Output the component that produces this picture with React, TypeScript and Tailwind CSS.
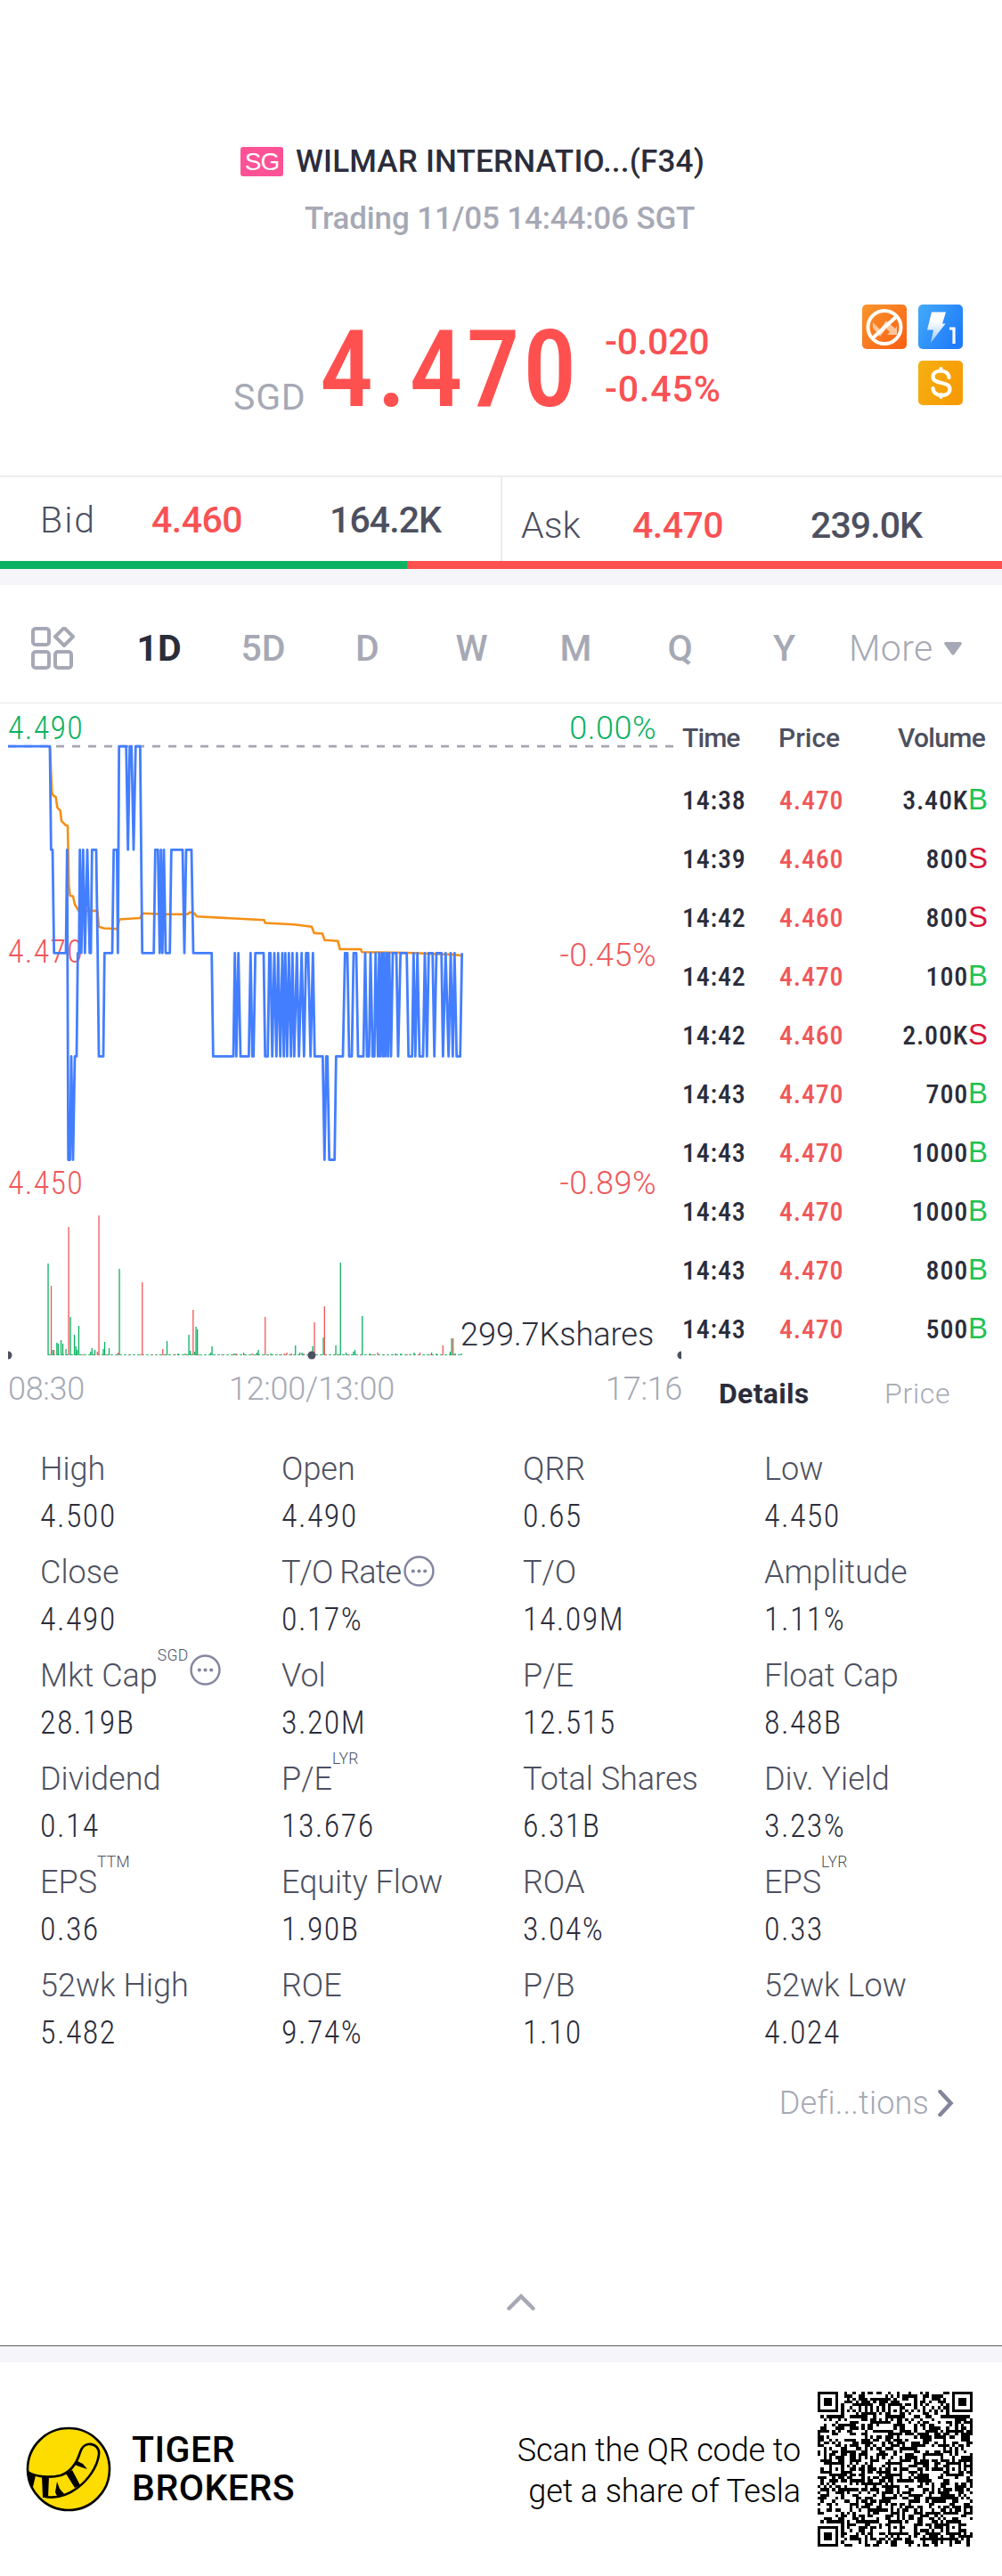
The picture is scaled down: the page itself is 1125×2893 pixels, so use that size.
import type { ReactNode } from 'react';

const GREEN = '#0bb262';
const RED = '#f0575a';

const periods = ['1D', '5D', 'D', 'W', 'M', 'Q', 'Y'];

const ticks: { time: string; price: string; volume: string; side: 'B' | 'S' }[] = [
  { time: '14:38', price: '4.470', volume: '3.40K', side: 'B' },
  { time: '14:39', price: '4.460', volume: '800', side: 'S' },
  { time: '14:42', price: '4.460', volume: '800', side: 'S' },
  { time: '14:42', price: '4.470', volume: '100', side: 'B' },
  { time: '14:42', price: '4.460', volume: '2.00K', side: 'S' },
  { time: '14:43', price: '4.470', volume: '700', side: 'B' },
  { time: '14:43', price: '4.470', volume: '1000', side: 'B' },
  { time: '14:43', price: '4.470', volume: '1000', side: 'B' },
  { time: '14:43', price: '4.470', volume: '800', side: 'B' },
  { time: '14:43', price: '4.470', volume: '500', side: 'B' },
];

interface Stat {
  label: string;
  value: string;
  sup?: string;
  info?: boolean;
}

const stats: Stat[] = [
  { label: 'High', value: '4.500' },
  { label: 'Open', value: '4.490' },
  { label: 'QRR', value: '0.65' },
  { label: 'Low', value: '4.450' },
  { label: 'Close', value: '4.490' },
  { label: 'T/O Rate', value: '0.17%', info: true },
  { label: 'T/O', value: '14.09M' },
  { label: 'Amplitude', value: '1.11%' },
  { label: 'Mkt Cap', value: '28.19B', sup: 'SGD', info: true },
  { label: 'Vol', value: '3.20M' },
  { label: 'P/E', value: '12.515' },
  { label: 'Float Cap', value: '8.48B' },
  { label: 'Dividend', value: '0.14' },
  { label: 'P/E', value: '13.676', sup: 'LYR' },
  { label: 'Total Shares', value: '6.31B' },
  { label: 'Div. Yield', value: '3.23%' },
  { label: 'EPS', value: '0.36', sup: 'TTM' },
  { label: 'Equity Flow', value: '1.90B' },
  { label: 'ROA', value: '3.04%' },
  { label: 'EPS', value: '0.33', sup: 'LYR' },
  { label: '52wk High', value: '5.482' },
  { label: 'ROE', value: '9.74%' },
  { label: 'P/B', value: '1.10' },
  { label: '52wk Low', value: '4.024' },
];

// y of each half-cent price level, 4.490 at the top
const levels = [48.2, 164.3, 280.3, 396.4, 512.5];

// [x in thirds of a pixel, price level]
const priceSteps: [number, number][] = [
  [27, 0], [168, 0], [172, 1], [177, 1], [182, 2], [222, 2], [226, 1], [230, 4], [236, 4], [240, 3],
  [246, 4], [252, 3], [258, 3], [262, 2], [266, 2], [269, 1], [274, 2], [280, 1], [286, 2], [294, 1],
  [302, 2], [306, 2], [310, 1], [324, 1], [329, 2], [333, 3], [348, 3], [352, 2], [378, 2], [383, 1],
  [394, 1], [397, 2], [401, 0], [425, 0], [431, 1], [437, 0], [443, 0], [450, 1], [457, 0], [472, 0],
  [479, 2], [518, 2], [523, 1], [532, 1], [538, 2], [542, 1], [547, 2], [552, 1], [558, 2], [572, 2],
  [577, 1], [615, 1], [621, 2], [627, 1], [645, 1], [651, 2], [713, 2], [718, 3], [786, 3], [791, 2],
  [796, 3], [803, 2], [810, 3], [838, 3], [844, 2], [850, 3], [854, 3], [860, 2], [888, 2], [893, 3],
  [902, 3], [907, 2], [911, 2], [917, 3], [924, 2], [931, 3], [937, 2], [944, 3], [951, 2], [956, 3],
  [961, 2], [967, 3], [973, 2], [980, 3], [985, 2], [991, 3], [1000, 2], [1007, 3], [1016, 2], [1024, 3],
  [1031, 2], [1038, 2], [1046, 3], [1054, 2], [1060, 3], [1087, 3], [1093, 4], [1099, 3], [1103, 3], [1109, 4],
  [1127, 4], [1132, 3], [1155, 3], [1162, 2], [1170, 2], [1176, 3], [1185, 3], [1191, 2], [1200, 2], [1206, 3],
  [1224, 3], [1230, 2], [1236, 3], [1243, 3], [1248, 2], [1255, 3], [1261, 3], [1265, 2], [1273, 3], [1277, 2],
  [1281, 3], [1286, 2], [1290, 3], [1294, 2], [1298, 3], [1303, 2], [1307, 3], [1311, 2], [1317, 3], [1323, 2],
  [1335, 2], [1341, 3], [1349, 2], [1370, 2], [1376, 3], [1388, 3], [1393, 2], [1399, 3], [1406, 2], [1413, 3],
  [1425, 3], [1431, 2], [1438, 3], [1444, 2], [1457, 2], [1463, 3], [1470, 2], [1487, 2], [1492, 3], [1501, 2],
  [1511, 3], [1518, 2], [1525, 3], [1531, 2], [1538, 3], [1550, 3], [1556, 2],
];

const averageSteps: [number, number][] = [
  [168, 163], [175, 310], [180, 318], [188, 322], [193, 355], [203, 365], [207, 397], [220, 410], [228, 413],
  [232, 600], [236, 633], [246, 634], [252, 660], [265, 680], [328, 680], [333, 730], [350, 735], [395, 737],
  [402, 707], [472, 703], [480, 688], [560, 691], [630, 691], [640, 685], [655, 688], [663, 698], [890, 709],
  [893, 718], [990, 723], [1050, 730], [1058, 750], [1086, 752], [1093, 772], [1138, 775], [1145, 801],
  [1215, 801], [1219, 810], [1370, 812], [1530, 818], [1556, 821],
];

const toPoints = (points: [number, number][]) => points.map(([x, y]) => `${x},${y}`).join(' ');
const pricePoints = toPoints(priceSteps.map(([x, level]) => [x / 3, levels[level]]));
const averagePoints = toPoints(averageSteps.map(([x, y]) => [x / 3, y / 2.8 - 10]));

const upBars: [number, number][] = [
  [54, 103], [59, 6], [63.8, 14], [65.3, 13], [68.5, 17], [70.5, 13], [74, 7], [79, 43], [83.5, 23], [85.2, 10],
  [86.7, 6], [88.4, 33], [101.7, 4], [103.2, 8], [106.5, 6], [116, 7], [117.5, 15], [122.5, 8], [134, 97],
  [187.5, 16], [212, 23], [213.6, 5], [218.5, 4], [220, 32], [221.6, 29], [236.5, 3], [238, 10], [273.5, 3],
  [288.5, 3], [290, 6], [331.7, 11], [336.5, 3], [339, 3], [351, 10], [363, 20], [377, 11], [382.2, 104],
  [388.5, 3], [396.8, 4], [398.4, 6], [406.7, 44], [415, 2], [444, 2], [450, 2], [465, 3], [484.5, 3], [490, 2],
  [505.4, 4], [507, 19], [518, 2], [187, 1], [200, 2], [208, 2], [263, 2], [304, 2], [511, 2],
];

const downBars: [number, number][] = [
  [57.5, 78], [60.5, 6], [77, 144], [109.3, 4], [111, 157], [132.5, 3], [159.7, 82], [182.7, 7], [216.8, 51],
  [265, 2], [283, 2], [297.7, 43], [319, 2], [322, 3], [327, 2], [341, 2], [353, 37], [364.3, 55], [424, 3],
  [471.5, 3], [497.2, 11], [508.7, 19],
];

function VolumeBars({ bars, color }: { bars: [number, number][]; color: string }) {
  return (
    <g fill={color}>
      {bars.map(([x, h]) => (
        <rect key={x} x={x - 0.6} y={732 - h} width={1.3} height={h} />
      ))}
    </g>
  );
}

function PriceChart() {
  return (
    <svg viewBox="0 0 765 745" className="absolute inset-0 h-[745px] w-[765px]">
      <line x1="9" x2="757" y1="48.2" y2="48.2" stroke="#a4a7b3" strokeWidth="2.8" strokeDasharray="9 9" />
      <polyline points={averagePoints} fill="none" stroke="#f58f16" strokeWidth="2.6" strokeLinejoin="round" />
      <polyline points={pricePoints} fill="none" stroke="#437eff" strokeWidth="2.8" strokeLinejoin="round" />
      <line x1="54" x2="519" y1="731.6" y2="731.6" stroke={GREEN} strokeWidth="0.9" strokeDasharray="3 2" />
      <line x1="92" x2="515" y1="731.6" y2="731.6" stroke={RED} strokeWidth="0.8" strokeDasharray="2 11" />
      <VolumeBars bars={upBars} color={GREEN} />
      <VolumeBars bars={downBars} color={RED} />
      <g fill="#4d5060">
        <path d="M9 727.5a4.5 4.5 0 0 1 0 9z" />
        <circle cx="350" cy="732" r="4.5" />
        <path d="M765 727.5a4.5 4.5 0 0 0 0 9z" />
      </g>
    </svg>
  );
}

function InfoIcon() {
  return (
    <svg viewBox="0 0 34 34" className="h-[35px] w-[35px]">
      <circle cx="17" cy="17" r="15.5" fill="none" stroke="#8587a0" strokeWidth="2.4" />
      <g fill="#8587a0">
        <circle cx="10.5" cy="17" r="2" />
        <circle cx="17" cy="17" r="2" />
        <circle cx="23.5" cy="17" r="2" />
      </g>
    </svg>
  );
}

function Badges() {
  return (
    <div className="ml-auto mr-11 grid grid-cols-[50px_50px] gap-[13px]">
      <svg viewBox="0 0 50 50">
        <defs>
          <linearGradient id="orange" x1="0" y1="0" x2="1" y2="1">
            <stop offset="0" stopColor="#f8962c" />
            <stop offset="1" stopColor="#fb5d12" />
          </linearGradient>
        </defs>
        <rect width="50" height="50" rx="5" fill="url(#orange)" />
        <path d="M12 20l8 8 7-10 10 9 2-3v10H28l3-3-4-4-7 9-8-10z" fill="#fdc59c" />
        <circle cx="25" cy="25.500" r="18.500" fill="none" stroke="#fff" strokeWidth="4" />
        <path d="M12 37.500L38.500 13.500" stroke="#fff" strokeWidth="4" />
      </svg>
      <svg viewBox="0 0 50 50">
        <defs>
          <linearGradient id="blue" x1="0" y1="0" x2="1" y2="0.6">
            <stop offset="0" stopColor="#44abf8" />
            <stop offset="1" stopColor="#1f7cfb" />
          </linearGradient>
          <linearGradient id="bolt" x1="0" y1="0" x2="0" y2="1">
            <stop offset="0.3" stopColor="#fff" />
            <stop offset="1" stopColor="#9cc8fb" />
          </linearGradient>
        </defs>
        <rect width="50" height="50" rx="5" fill="url(#blue)" />
        <path d="M15 8.500h16l-4 13h3.500L14 43l3-14.500H10z" fill="url(#bolt)" />
        <path d="M35 27h5v17" fill="none" stroke="#fff" strokeWidth="3.200" />
      </svg>
      <svg viewBox="0 0 50 50" className="col-start-2">
        <defs>
          <linearGradient id="gold" x1="0" y1="0" x2="1" y2="0.5">
            <stop offset="0" stopColor="#f6b011" />
            <stop offset="1" stopColor="#f79b05" />
          </linearGradient>
        </defs>
        <rect width="50" height="50" rx="5" fill="url(#gold)" />
        <path
          d="M34.500 19c0-4.500-4-7.500-9-7.500s-9 2.500-9 6.700c0 9.300 19 4.300 19 13.800 0 4.500-4.500 7-9.500 7s-9.500-3-9.500-8M25.500 9v3M25.500 38v3"
          fill="none"
          stroke="#fff"
          strokeWidth="4.200"
          strokeLinecap="round"
        />
      </svg>
    </div>
  );
}

function Header() {
  return (
    <header className="h-[534px] pt-[156px]">
      <div className="flex h-[50px] items-center pl-[270px]">
        <span className="h-[33px] w-[48px] rounded-[3px] bg-[#fd5296] text-center font-['Liberation_Sans',sans-serif] text-[28px] leading-[34px] tracking-[-1px] text-white">
          SG
        </span>
        <h1 className="mt-[2px] ml-[14px] text-[35px] font-medium tracking-[0.2px]">WILMAR INTERNATIO...(F34)</h1>
      </div>
      <p className="mt-[15px] pl-[342px] text-[35px] leading-[50px] font-medium tracking-[-0.15px] text-[#a6a9b5]">
        Trading 11/05 14:44:06 SGT
      </p>
      <div className="mt-[71px] flex items-start pl-[262px]">
        <span className="mt-[73px] w-[97px] text-[41px] leading-[62px] tracking-[0.8px] text-[#a6a9b5]">SGD</span>
        <strong className="mt-[10px] w-[320px] text-[121px] leading-[126px] font-medium font-stretch-condensed tracking-[3.2px] text-[#ff5050]">
          4.470
        </strong>
        <div className="mt-[16px] text-[41px] leading-[53px] font-medium text-[#f95254]">
          <p className="tracking-[-0.2px]">-0.020</p>
          <p className="tracking-[0.9px]">-0.45%</p>
        </div>
        <Badges />
      </div>
    </header>
  );
}

function Quotes() {
  return (
    <section>
      <div className="flex h-24 border-t-2 border-[#ececef] text-[41px] leading-[96px] text-[#4d5060]">
        <div className="flex w-[562px] pl-[45px]">
          <span className="w-[125px] font-light tracking-[2px]">Bid</span>
          <span className="w-[200px] font-medium tracking-[-0.5px] text-[#f95254]">4.460</span>
          <span className="font-medium tracking-[-0.9px]">164.2K</span>
        </div>
        <div className="flex flex-1 border-l-2 border-[#ececef] pt-[6px] pl-[21px]">
          <span className="w-[125px] font-light">Ask</span>
          <span className="w-[200px] font-medium tracking-[-0.5px] text-[#f95254]">4.470</span>
          <span className="font-medium tracking-[-0.9px]">239.0K</span>
        </div>
      </div>
      <div className="flex h-[9px] bg-[#ff5050]">
        <div className="w-[457px] bg-[#0bb262]" />
      </div>
      <div className="h-[18px] bg-[#f5f5fa]" />
    </section>
  );
}

function PeriodTabs() {
  return (
    <nav className="flex h-[133px] items-center border-b border-[#e6e6ea] pt-[11px] pl-[35px] text-[41px] font-medium text-[#a6a9b5]">
      <svg viewBox="0 0 50 50" className="mr-[35px] h-[50px] w-[50px]" fill="none" stroke="#a6a9b5" strokeWidth="4">
        <rect x="2" y="2" width="18" height="18" rx="3" />
        <path d="M37 1l10 10-10 10-10-10z" strokeLinejoin="round" />
        <rect x="2" y="28" width="18" height="18" rx="3" />
        <rect x="27" y="28" width="18" height="18" rx="3" />
      </svg>
      {periods.map((period, i) => (
        <span key={period} className={i === 0 ? 'w-[117px] text-center font-bold text-[#2b2d3b]' : 'w-[117px] text-center'}>
          {period}
        </span>
      ))}
      <span className="ml-[14px] font-light tracking-[0.4px]">More</span>
      <svg viewBox="0 0 20 15" className="ml-[12px] h-[15px] w-5 fill-[#a6a9b5]">
        <path d="M1 0h18l1 2-9 12.500h-2L0 2z" />
      </svg>
    </nav>
  );
}

function ChartPanel() {
  return (
    <div className="relative w-[765px] text-[36px] leading-[36px] font-light">
      <div className="absolute inset-x-0 top-[10px] flex justify-between pr-[28px] pl-[9px] text-[#0bb262]">
        <span className="font-stretch-condensed tracking-[1.3px]">4.490</span>
        <span className="tracking-[0.5px]">0.00%</span>
      </div>
      <div className="absolute inset-x-0 top-[261px] flex justify-between pr-[28px] pl-[9px] text-[#f0575a]">
        <span className="font-stretch-condensed tracking-[1.3px]">4.470</span>
        <span className="mt-1 tracking-[0.5px]">-0.45%</span>
      </div>
      <div className="absolute inset-x-0 top-[521px] flex justify-between pr-[28px] pl-[9px] text-[#f0575a]">
        <span className="font-stretch-condensed tracking-[1.3px]">4.450</span>
        <span className="tracking-[0.5px]">-0.89%</span>
      </div>
      <PriceChart />
      <span className="absolute top-[691px] left-[517px] text-[#2b2d3b]">299.7Kshares</span>
      <div className="absolute inset-x-0 top-[752px] tracking-[-0.3px] text-[#a6a9b5]">
        <span className="absolute left-[9px]">08:30</span>
        <span className="absolute left-[257px]">12:00/13:00</span>
        <span className="absolute -right-px">17:16</span>
      </div>
    </div>
  );
}

function TickList() {
  return (
    <div className="flex-1 pt-px text-[30px] font-medium">
      <div className="flex leading-[75px] text-[#4d5060]">
        <span className="w-[109px] pl-px tracking-[-0.9px]">Time</span>
        <span>Price</span>
        <span className="ml-auto pr-[19px] tracking-[-0.7px]">Volume</span>
      </div>
      {ticks.map((tick, i) => (
        <div key={i} className="flex leading-[66px] font-stretch-condensed tracking-[0.8px]">
          <span className="w-[110px] pl-[1px]">{tick.time}</span>
          <span className="text-[#f0575a]">{tick.price}</span>
          <span className="ml-auto">{tick.volume}</span>
          <span
            className={
              tick.side === 'B'
                ? "-mt-px w-[38px] font-['Liberation_Sans',sans-serif] text-[33px] font-normal text-[#1fc24f]"
                : "-mt-px w-[38px] font-['Liberation_Sans',sans-serif] text-[33px] font-normal text-[#dc1236]"
            }
          >
            {tick.side}
          </span>
        </div>
      ))}
      <div className="flex text-[32px] leading-[79px]">
        <span className="w-[185px] pl-[42px] font-bold tracking-[0.3px]">Details</span>
        <span className="pl-[43px] font-light tracking-[0.7px] text-[#a6a9b5]">Price</span>
      </div>
    </div>
  );
}

function StatCell({ stat }: { stat: Stat }) {
  return (
    <div>
      <dt className="flex h-[53px] items-center text-[#4d5060]">
        <span className={stat.label === 'T/O Rate' ? 'tracking-[-0.9px]' : ''}>{stat.label}</span>
        {stat.sup && <sup className="top-0 self-start text-[17.5px] leading-[8px] tracking-[0.3px]">{stat.sup}</sup>}
        {stat.info && (
          <span className={stat.sup ? 'mb-[13px] ml-px' : 'mb-[3px] ml-[3px]'}>
            <InfoIcon />
          </span>
        )}
      </dt>
      <dd className="leading-[54px] font-stretch-condensed tracking-[1.4px] text-[#2b2d3b]">{stat.value}</dd>
    </div>
  );
}

const QR_SIZE = 53;

// 7x7 finder corners and 5x5 alignment marks over a pseudo random payload
function qrPath(): string {
  const dark: boolean[][] = [];
  let seed = 20241105;
  for (let y = 0; y < QR_SIZE; y++) {
    dark.push([]);
    for (let x = 0; x < QR_SIZE; x++) {
      seed = (Math.imul(seed, 1664525) + 1013904223) >>> 0;
      dark[y].push(((seed >>> 16) & 1) === 1);
    }
  }
  const ring = (cx: number, cy: number, radius: number, isDark: (d: number) => boolean) => {
    for (let y = cy - radius; y <= cy + radius; y++) {
      for (let x = cx - radius; x <= cx + radius; x++) {
        if (y < 0 || x < 0 || y >= QR_SIZE || x >= QR_SIZE) continue;
        dark[y][x] = isDark(Math.max(Math.abs(x - cx), Math.abs(y - cy)));
      }
    }
  };
  for (let i = 8; i < QR_SIZE - 8; i++) {
    dark[6][i] = i % 2 === 0;
    dark[i][6] = i % 2 === 0;
  }
  for (const cy of [6, 26, 46]) {
    for (const cx of [6, 26, 46]) ring(cx, cy, 2, (d) => d !== 1);
  }
  ring(3, 3, 4, (d) => d < 2 || d === 3);
  ring(49, 3, 4, (d) => d < 2 || d === 3);
  ring(3, 49, 4, (d) => d < 2 || d === 3);
  return dark.flatMap((row, y) => row.map((on, x) => (on ? `M${x} ${y}h1v1h-1z` : ''))).join('');
}

function QrCode() {
  return (
    <svg viewBox="0 0 53 53" className="h-[174px] w-[174px]" shapeRendering="crispEdges">
      <path d={qrPath()} />
    </svg>
  );
}

function TigerLogo() {
  return (
    <svg viewBox="0 0 96 96" className="h-24 w-24">
      <defs>
        <clipPath id="disc">
          <circle cx="48" cy="48" r="46" />
        </clipPath>
      </defs>
      <circle cx="48" cy="48" r="46" fill="#fddc00" />
      <g clipPath="url(#disc)">
        <path
          d="M2 51c10 6 26 7 37 4 12-4 18-13 22-26 2-6 5-8.500 9-9 8-1 13 5 12 12-2 14-12 28-24 37-12 9-24 12-36 10"
          fill="none"
          stroke="#000"
          strokeWidth="2.600"
        />
        <path d="M2 50l9 5-3 13-6-6zM18 56h8l-1 24h-6zM35 62l3 8 6 7-8 3 -3-6zM45 53l7-4 9 17-6 3zM55 43l3-4 6 3 5 6-9-3z" fill="#000" />
      </g>
      <circle cx="48" cy="48" r="46" fill="none" stroke="#000" strokeWidth="2.600" />
    </svg>
  );
}

function Footer({ children }: { children: ReactNode }) {
  return (
    <footer className="border-t border-[#5c5c62]">
      <div className="h-[18px] bg-[#f5f5fa]" />
      <div className="flex h-[240px] items-center pr-[33px] pl-[29px] text-black">
        <TigerLogo />
        <p className="ml-[23px] text-[41px] leading-[43px] font-medium tracking-[0.5px]">
          TIGER
          <br />
          BROKERS
        </p>
        <p className="mt-[3px] ml-auto pr-[19px] text-right text-[36px] leading-[46px] font-light tracking-[-0.1px]">{children}</p>
        <QrCode />
      </div>
    </footer>
  );
}

export default function App() {
  return (
    <main className="h-[2893px] w-[1125px] overflow-hidden bg-white font-[Roboto,sans-serif] whitespace-nowrap text-[#2b2d3b]">
      <Header />
      <Quotes />
      <PeriodTabs />
      <section className="flex h-[814px]">
        <ChartPanel />
        <TickList />
      </section>
      <dl className="grid grid-cols-[271px_271px_271px_1fr] gap-y-[9px] pt-[19px] pl-[45px] text-[36px] font-light">
        {stats.map((stat, i) => (
          <StatCell key={i} stat={stat} />
        ))}
      </dl>
      <div className="flex h-[103px] items-center justify-end pr-[54px] text-[36px] font-light tracking-[0.2px] text-[#a6a9b5]">
        Defi...tions
        <svg viewBox="0 0 18 30" className="ml-[10px] h-[30px] w-[18px]" fill="none" stroke="#83869a" strokeWidth="4.500">
          <path d="M2.500 2l12 13-12 13" strokeLinecap="round" />
        </svg>
      </div>
      <div className="flex h-[221px] items-end pb-[39px] pl-[569px]">
        <svg viewBox="0 0 32 20" className="h-5 w-8" fill="none" stroke="#a6a9b5" strokeWidth="4.500">
          <path d="M2.500 17.500L16 4l13.500 13.500" strokeLinecap="round" />
        </svg>
      </div>
      <Footer>
        Scan the QR code to
        <br />
        get a share of Tesla
      </Footer>
    </main>
  );
}
